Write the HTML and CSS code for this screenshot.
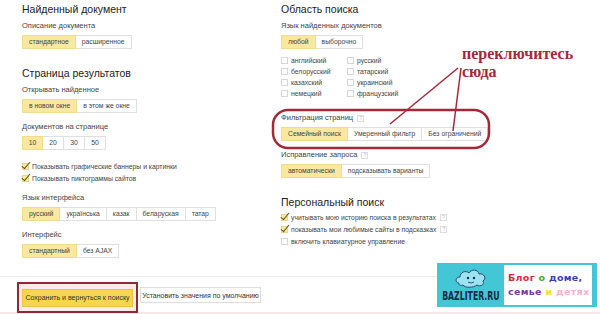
FILE: index.html
```html
<!DOCTYPE html>
<html lang="ru">
<head>
    <meta charset="utf-8">
    <title>Настройки поиска</title>
    <link rel="stylesheet" href="styles.css">
</head>
<body>
    <div class="columns">
        <div class="col col-left">
            <h2 class="title">Найденный документ</h2>
            <div class="label">Описание документа</div>
            <div class="seg">
                <span class="seg-item on">стандартное</span>
                <span class="seg-item">расширенное</span>
            </div>

            <h2 class="title">Страница результатов</h2>
            <div class="label">Открывать найденное</div>
            <div class="seg">
                <span class="seg-item on">в новом окне</span>
                <span class="seg-item">в этом же окне</span>
            </div>
            <div class="label">Документов на странице</div>
            <div class="seg">
                <span class="seg-item num on">10</span>
                <span class="seg-item num">20</span>
                <span class="seg-item num">30</span>
                <span class="seg-item num">50</span>
            </div>
            <div class="checks checks-left">
                <div class="check"><span class="box checked"></span>Показывать графические баннеры и картинки</div>
                <div class="check"><span class="box checked"></span>Показывать пиктограммы сайтов</div>
            </div>
            <div class="label">Язык интерфейса</div>
            <div class="seg">
                <span class="seg-item on">русский</span>
                <span class="seg-item">українська</span>
                <span class="seg-item">казак</span>
                <span class="seg-item">беларуская</span>
                <span class="seg-item">татар</span>
            </div>
            <div class="label">Интерфейс</div>
            <div class="seg">
                <span class="seg-item on">стандартный</span>
                <span class="seg-item">без AJAX</span>
            </div>
        </div>

        <div class="col col-right">
            <h2 class="title">Область поиска</h2>
            <div class="label">Язык найденных документов</div>
            <div class="seg">
                <span class="seg-item on">любой</span>
                <span class="seg-item">выборочно</span>
            </div>
            <div class="lang-grid">
                <div class="check"><span class="box"></span>английский</div>
                <div class="check"><span class="box"></span>русский</div>
                <div class="check"><span class="box"></span>белорусский</div>
                <div class="check"><span class="box"></span>татарский</div>
                <div class="check"><span class="box"></span>казахский</div>
                <div class="check"><span class="box"></span>украинский</div>
                <div class="check"><span class="box"></span>немецкий</div>
                <div class="check"><span class="box"></span>французский</div>
            </div>
            <div class="label label-filter">Фильтрация страниц <span class="help">?</span></div>
            <div class="seg">
                <span class="seg-item on">Семейный поиск</span>
                <span class="seg-item">Умеренный фильтр</span>
                <span class="seg-item">Без ограничений</span>
            </div>
            <div class="label">Исправление запроса <span class="help">?</span></div>
            <div class="seg">
                <span class="seg-item on">автоматически</span>
                <span class="seg-item">подсказывать варианты</span>
            </div>

            <h2 class="title">Персональный поиск</h2>
            <div class="checks checks-right">
                <div class="check"><span class="box checked"></span>учитывать мою историю поиска в результатах <span class="help">?</span></div>
                <div class="check"><span class="box checked"></span>показывать мои любимые сайты в подсказках <span class="help">?</span></div>
                <div class="check"><span class="box"></span>включить клавиатурное управление</div>
            </div>
        </div>
    </div>

    <div class="footer">
        <div class="save-frame">
            <button class="btn btn-save">Сохранить и вернуться к поиску</button>
        </div>
        <button class="btn btn-default">Установить значения по умолчанию</button>
    </div>

    <!-- annotation over the screenshot -->
    <svg class="marks" width="600" height="314" viewBox="0 0 600 314">
        <rect x="273" y="110" width="216" height="38" rx="15" ry="15" fill="none" stroke="#a3293a" stroke-width="2.5"/>
        <line x1="458" y1="68" x2="390" y2="124" stroke="#a3293a" stroke-width="1.5"/>
        <line x1="461" y1="68" x2="453" y2="131" stroke="#a3293a" stroke-width="1.5"/>
    </svg>
    <div class="note">переключитесь<br>сюда</div>

    <div class="logo">
        <div class="logo-left">
            <svg class="mascot" width="36" height="20" viewBox="0 0 36 20">
                <path d="M6 15 C2 15 2 9 7 9 C7 4 13 2 16 5 C18 1 25 1 26 6 C31 5 34 10 30 13 C32 17 27 19 24 17 C20 20 12 20 10 17 C8 18 5 17 6 15 Z" fill="#9be3f2" stroke="#2a4a6a" stroke-width="1"/>
                <circle cx="15" cy="10" r="1.2" fill="#1d2f4a"/>
                <circle cx="21" cy="10" r="1.2" fill="#1d2f4a"/>
                <path d="M15 14 Q18 16 21 14" fill="none" stroke="#1d2f4a" stroke-width="0.8"/>
            </svg>
            <div class="logo-name">BAZLITER.RU</div>
        </div>
        <div class="logo-right">
            <div><span class="c-red">Блог</span> <span class="c-green">о</span> <span class="c-blue">доме,</span></div>
            <div><span class="c-purple">семье</span> <span class="c-yellow">и</span> <span class="c-pink">детях</span></div>
        </div>
    </div>
</body>
</html>
```

FILE: styles.css
```css
* {
    padding: 0;
    margin: 0;
    box-sizing: border-box;
}
body {
    width: 600px;
    height: 314px;
    background-color: #ffffff;
    font-family: "Liberation Sans", Arial, sans-serif;
    color: #333333;
    position: relative;
    overflow: hidden;
}
.columns {
    display: flex;
    height: 276px;
    padding-top: 2px;
}
.col-left {
    width: 281px;
    padding-left: 22px;
}
.col-right {
    flex: 1;
}
.title {
    font-size: 10.5px;
    line-height: 14px;
    font-weight: normal;
    color: #222222;
    margin-top: 17px;
}
.col .title:first-child {
    margin-top: 0;
}
.label {
    font-size: 7.5px;
    line-height: 10px;
    color: #444444;
    margin-top: 9px;
    display: flex;
    align-items: center;
}
.title + .label {
    margin-top: 5px;
}
.label-filter {
    margin-top: 14px;
}
.seg {
    display: flex;
    margin-top: 4px;
    height: 14px;
}
.seg-item {
    font-size: 6.8px;
    line-height: 12px;
    padding: 0 6px;
    border: 1px solid #e0e0e0;
    border-left: none;
    color: #444444;
    background-color: #ffffff;
    white-space: nowrap;
}
.seg-item:first-child {
    border-left: 1px solid #e0e0e0;
}
.seg-item.on {
    background-color: #fbe8a0;
    border-color: #f1dc8a;
}
.seg-item.num {
    width: 21px;
    padding: 0;
    text-align: center;
}
.checks-left {
    margin-top: 10px;
}
.checks-right {
    margin-top: 2px;
}
.check {
    display: flex;
    align-items: center;
    font-size: 6.8px;
    color: #444444;
    height: 12px;
    white-space: nowrap;
}
.box {
    width: 7px;
    height: 7px;
    border: 1px solid #d6d6d6;
    margin-right: 3px;
    flex-shrink: 0;
    position: relative;
    background-color: #ffffff;
}
.box.checked {
    background-color: #fbe8a0;
    border-color: #e8d790;
}
.box.checked::after {
    content: "";
    position: absolute;
    left: 1px;
    top: -4px;
    width: 3px;
    height: 8px;
    border-right: 1.6px solid #5f5510;
    border-bottom: 1.6px solid #5f5510;
    transform: rotate(40deg);
}
.lang-grid {
    display: grid;
    grid-template-columns: 66px 66px;
    margin-top: 6px;
}
.lang-grid .check {
    height: 11px;
}
.help {
    display: inline-block;
    width: 7px;
    height: 7px;
    border: 1px solid #dddddd;
    color: #bbbbbb;
    font-size: 5px;
    line-height: 5px;
    text-align: center;
    margin-left: 4px;
}
.footer {
    border-top: 1px solid #ececec;
    display: flex;
    align-items: flex-start;
    padding: 5px 0 0 17px;
    height: 38px;
    border-bottom: 2px solid #f8e8e8;
}
.save-frame {
    border: 2px solid #8e2a34;
    padding: 2px 3px 4px;
    background-color: #fbeaea;
}
.btn {
    font-family: "Liberation Sans", Arial, sans-serif;
    font-size: 7px;
    color: #333333;
    border: 1px solid #dedede;
    background-color: #ffffff;
    height: 18px;
    padding: 0;
    white-space: nowrap;
    cursor: pointer;
}
.btn-save {
    width: 111px;
    background-color: #f5d64e;
    border-color: #e8c53a;
}
.btn-default {
    width: 121px;
    height: 16px;
    margin: 5px 0 0 2px;
}
.marks {
    position: absolute;
    left: 0;
    top: 0;
    pointer-events: none;
}
.note {
    position: absolute;
    left: 462px;
    top: 45px;
    font-family: "Liberation Serif", "Times New Roman", serif;
    font-weight: bold;
    font-size: 16px;
    line-height: 18px;
    color: #a3293a;
}
.logo {
    position: absolute;
    left: 437px;
    top: 263px;
    width: 160px;
    height: 44px;
    background-color: #43c6d6;
    display: flex;
    align-items: center;
    padding: 0 5px 0 3px;
}
.logo-left {
    width: 62px;
    display: flex;
    flex-direction: column;
    align-items: center;
}
.mascot {
    margin-bottom: 1px;
}
.logo-name {
    font-family: "DejaVu Sans Condensed", "DejaVu Sans", sans-serif;
    font-weight: bold;
    font-size: 12px;
    line-height: 14px;
    color: #152a45;
    transform: scaleX(0.72);
    white-space: nowrap;
}
.logo-right {
    flex: 1;
    height: 40px;
    background-color: #ffffff;
    margin-left: 2px;
    padding: 6px 0 0 4px;
    font-family: "DejaVu Sans", sans-serif;
    font-weight: bold;
    font-size: 9.5px;
    line-height: 14px;
    letter-spacing: 0.3px;
    white-space: nowrap;
}
.c-red { color: #e0263a; }
.c-green { color: #3fae2c; }
.c-blue { color: #3b3fae; }
.c-purple { color: #7a3a9e; }
.c-yellow { color: #f2e12a; }
.c-pink { color: #f3b2cb; }
```
